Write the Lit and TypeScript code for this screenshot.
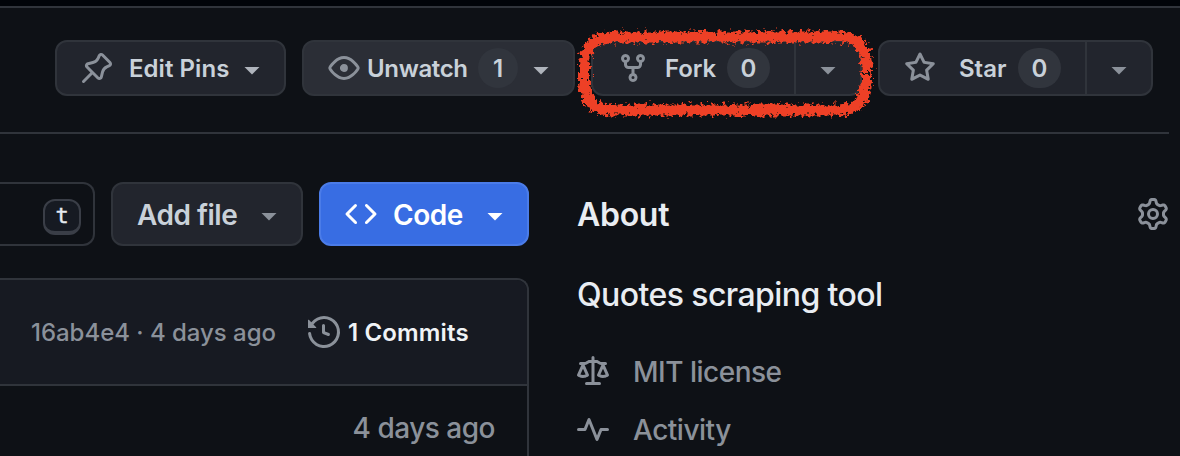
import { LitElement, html, css, svg } from "lit";
import { customElement, property } from "lit/decorators.js";

const ICONS: Record<string, string> = {
  pin: "m11.294.984 3.722 3.722a1.75 1.75 0 0 1-.504 2.826l-1.327.613a3.089 3.089 0 0 0-1.707 2.084l-.584 2.454c-.317 1.332-1.972 1.8-2.94.832L5.75 11.311 1.78 15.28a.749.749 0 1 1-1.06-1.06l3.969-3.97-2.204-2.204c-.968-.968-.5-2.623.832-2.94l2.454-.584a3.08 3.08 0 0 0 2.084-1.707l.613-1.327a1.75 1.75 0 0 1 2.826-.504ZM6.283 9.723l2.732 2.731a.25.25 0 0 0 .42-.119l.584-2.454a4.586 4.586 0 0 1 2.537-3.098l1.328-.613a.25.25 0 0 0 .072-.404l-3.722-3.722a.25.25 0 0 0-.404.072l-.613 1.328a4.584 4.584 0 0 1-3.098 2.537l-2.454.584a.25.25 0 0 0-.119.42l2.731 2.732Z",
  eye: "M8 2c1.981 0 3.671.992 4.933 2.078 1.27 1.091 2.187 2.345 2.637 3.023a1.62 1.62 0 0 1 0 1.798c-.45.678-1.367 1.932-2.637 3.023C11.67 13.008 9.981 14 8 14c-1.981 0-3.671-.992-4.933-2.078C1.797 10.83.88 9.576.43 8.898a1.62 1.62 0 0 1 0-1.798c.45-.677 1.367-1.931 2.637-3.022C4.33 2.992 6.019 2 8 2ZM1.679 7.932a.12.12 0 0 0 0 .136c.411.622 1.241 1.75 2.366 2.717C5.176 11.758 6.527 12.5 8 12.5c1.473 0 2.825-.742 3.955-1.715 1.124-.967 1.954-2.096 2.366-2.717a.12.12 0 0 0 0-.136c-.412-.621-1.242-1.75-2.366-2.717C10.824 4.242 9.473 3.5 8 3.5c-1.473 0-2.825.742-3.955 1.715-1.124.967-1.954 2.096-2.366 2.717ZM8 10a2 2 0 1 1-.001-3.999A2 2 0 0 1 8 10Z",
  fork: "M5 5.372v.878c0 .414.336.75.75.75h4.5a.75.75 0 0 0 .75-.75v-.878a2.25 2.25 0 1 1 1.5 0v.878a2.25 2.25 0 0 1-2.25 2.25h-1.5v2.128a2.251 2.251 0 1 1-1.5 0V8.5h-1.5A2.25 2.25 0 0 1 3.5 6.25v-.878a2.25 2.25 0 1 1 1.5 0ZM5 3.25a.75.75 0 1 0-1.5 0 .75.75 0 0 0 1.5 0Zm6.75.75a.75.75 0 1 0 0-1.5.75.75 0 0 0 0 1.5Zm-3 8.75a.75.75 0 1 0-1.5 0 .75.75 0 0 0 1.5 0Z",
  star: "M8 .25a.75.75 0 0 1 .673.418l1.882 3.815 4.21.612a.75.75 0 0 1 .416 1.279l-3.046 2.97.719 4.192a.751.751 0 0 1-1.088.791L8 12.347l-3.766 1.98a.75.75 0 0 1-1.088-.79l.72-4.194L.818 6.374a.75.75 0 0 1 .416-1.28l4.21-.611L7.327.668A.75.75 0 0 1 8 .25Zm0 2.445L6.615 5.5a.75.75 0 0 1-.564.41l-3.097.45 2.24 2.184a.75.75 0 0 1 .216.664l-.528 3.084 2.769-1.456a.75.75 0 0 1 .698 0l2.77 1.456-.53-3.084a.75.75 0 0 1 .216-.664l2.24-2.183-3.096-.45a.75.75 0 0 1-.564-.41L8 2.694Z",
  code: "m11.28 3.22 4.25 4.25a.75.75 0 0 1 0 1.06l-4.25 4.25a.749.749 0 0 1-1.275-.326.749.749 0 0 1 .215-.734L13.94 8l-3.72-3.72a.749.749 0 0 1 .326-1.275.749.749 0 0 1 .734.215Zm-6.56 0a.751.751 0 0 1 1.042.018.751.751 0 0 1 .018 1.042L2.06 8l3.72 3.72a.749.749 0 0 1-.326 1.275.749.749 0 0 1-.734-.215L.47 8.53a.75.75 0 0 1 0-1.06Z",
  history: "m.427 1.927 1.215 1.215a8.002 8.002 0 1 1-1.6 5.685.75.75 0 1 1 1.493-.154 6.5 6.5 0 1 0 1.18-4.458l1.358 1.358A.25.25 0 0 1 3.896 6H.25A.25.25 0 0 1 0 5.75V2.104a.25.25 0 0 1 .427-.177ZM7.75 4a.75.75 0 0 1 .75.75v2.992l2.028.812a.75.75 0 0 1-.557 1.392l-2.5-1A.751.751 0 0 1 7 8.25v-3.5A.75.75 0 0 1 7.75 4Z",
  law: "M8.75.75V2h.985c.304 0 .603.08.867.231l1.29.736c.038.022.08.033.124.033h2.234a.75.75 0 0 1 0 1.5h-.427l2.111 4.692a.75.75 0 0 1-.154.838l-.53-.53.529.531-.001.002-.002.002-.006.006-.006.005-.01.01-.045.04c-.21.176-.441.327-.686.45C14.556 10.78 13.88 11 13 11a4.498 4.498 0 0 1-2.023-.454 3.544 3.544 0 0 1-.686-.45l-.045-.04-.016-.015-.006-.006-.004-.004v-.001a.75.75 0 0 1-.154-.838L12.178 4.5h-.162c-.305 0-.604-.079-.868-.231l-1.29-.736a.245.245 0 0 0-.124-.033H8.75V13h2.5a.75.75 0 0 1 0 1.5h-6.5a.75.75 0 0 1 0-1.5h2.5V3.5h-.984a.245.245 0 0 0-.124.033l-1.289.737c-.265.15-.564.23-.869.23h-.162l2.112 4.692a.75.75 0 0 1-.154.838l-.53-.53.529.531-.001.002-.002.002-.006.006-.016.015-.045.04c-.21.176-.441.327-.686.45C4.556 10.78 3.88 11 3 11a4.498 4.498 0 0 1-2.023-.454 3.544 3.544 0 0 1-.686-.45l-.045-.04-.016-.015-.006-.006-.004-.004v-.001a.75.75 0 0 1-.154-.838L2.178 4.5H1.75a.75.75 0 0 1 0-1.5h2.234a.249.249 0 0 0 .125-.033l1.288-.737c.265-.15.564-.23.869-.23h.984V.75a.75.75 0 0 1 1.5 0Zm2.945 8.477c.285.135.718.273 1.305.273s1.02-.138 1.305-.273L13 6.327Zm-10 0c.285.135.718.273 1.305.273s1.02-.138 1.305-.273L3 6.327Z",
  pulse: "M6 2c.306 0 .582.187.696.471L10 10.731l1.304-3.26A.751.751 0 0 1 12 7h3.25a.75.75 0 0 1 0 1.5h-2.742l-1.812 4.528a.751.751 0 0 1-1.392 0L6 4.77 4.696 8.03A.75.75 0 0 1 4 8.5H.75a.75.75 0 0 1 0-1.5h2.742l1.812-4.529A.751.751 0 0 1 6 2Z",
  gear: "M8 0a8.2 8.2 0 0 1 .701.031C9.444.095 9.99.645 10.16 1.29l.288 1.107c.018.066.079.158.212.224.231.114.454.243.668.386.123.082.233.09.299.071l1.103-.303c.644-.176 1.392.021 1.82.63.27.385.506.792.704 1.218.315.675.111 1.422-.364 1.891l-.814.806c-.049.048-.098.147-.088.294.016.257.016.515 0 .772-.01.147.038.246.088.294l.814.806c.475.469.679 1.216.364 1.891a7.977 7.977 0 0 1-.704 1.217c-.428.61-1.176.807-1.82.63l-1.102-.302c-.067-.019-.177-.011-.3.071a5.909 5.909 0 0 1-.668.386c-.133.066-.194.158-.211.224l-.29 1.106c-.168.646-.715 1.196-1.458 1.26a8.006 8.006 0 0 1-1.402 0c-.743-.064-1.289-.614-1.458-1.26l-.289-1.106c-.018-.066-.079-.158-.212-.224a5.738 5.738 0 0 1-.668-.386c-.123-.082-.233-.09-.299-.071l-1.103.303c-.644.176-1.392-.021-1.82-.63a8.12 8.12 0 0 1-.704-1.218c-.315-.675-.111-1.422.363-1.891l.815-.806c.05-.048.098-.147.088-.294a6.214 6.214 0 0 1 0-.772c.01-.147-.038-.246-.088-.294l-.815-.806C.635 6.045.431 5.298.746 4.623a7.92 7.92 0 0 1 .704-1.217c.428-.61 1.176-.807 1.82-.63l1.102.302c.067.019.177.011.3-.071.214-.143.437-.272.668-.386.133-.066.194-.158.211-.224l.29-1.106C6.009.645 6.556.095 7.299.03 7.53.01 7.764 0 8 0Zm-.571 1.525c-.036.003-.108.036-.137.146l-.289 1.105c-.147.561-.549.967-.998 1.189-.173.086-.34.183-.5.29-.417.278-.97.423-1.529.27l-1.103-.303c-.109-.03-.175.016-.195.045-.22.312-.412.644-.573.99-.014.031-.021.11.059.19l.815.806c.411.406.562.957.53 1.456a4.709 4.709 0 0 0 0 .582c.032.499-.119 1.05-.53 1.456l-.815.806c-.081.08-.073.159-.059.19.162.346.353.677.573.989.02.03.085.076.195.046l1.102-.303c.56-.153 1.113-.008 1.53.27.161.107.328.204.501.29.447.222.85.629.997 1.189l.289 1.105c.029.109.101.143.137.146a6.6 6.6 0 0 0 1.142 0c.036-.003.108-.036.137-.146l.289-1.105c.147-.561.549-.967.998-1.189.173-.086.34-.183.5-.29.417-.278.97-.423 1.529-.27l1.103.303c.109.029.175-.016.195-.045.22-.313.411-.644.573-.99.014-.031.021-.11-.059-.19l-.815-.806c-.411-.406-.562-.957-.53-1.456a4.709 4.709 0 0 0 0-.582c-.032-.499.119-1.05.53-1.456l.815-.806c.081-.08.073-.159.059-.19a6.464 6.464 0 0 0-.573-.989c-.02-.03-.085-.076-.195-.046l-1.102.303c-.56.153-1.113.008-1.53-.27a4.44 4.44 0 0 0-.501-.29c-.447-.222-.85-.629-.997-1.189l-.289-1.105c-.029-.11-.101-.143-.137-.146a6.6 6.6 0 0 0-1.142 0ZM11 8a3 3 0 1 1-6 0 3 3 0 0 1 6 0ZM9.5 8a1.5 1.5 0 1 0-3.001.001A1.5 1.5 0 0 0 9.5 8Z",
};

@customElement("oct-icon")
export class OctIcon extends LitElement {
  @property() name = "";
  static styles = css`
    :host { display: block; flex: none; width: 32px; height: 32px; }
    .glyph { display: block; width: 100%; height: 100%; fill: currentColor; overflow: visible; }
  `;
  render() {
    return html`<svg class="glyph" viewBox="0 0 16 16">${svg`<path d=${ICONS[this.name]}></path>`}</svg>`;
  }
}

@customElement("app-root")
export class AppRoot extends LitElement {
  static styles = css`
    :host {
      display: block;
      height: 456px;
      overflow: hidden;
      position: relative;
      background: #0e1116;
      color: #c9d1d9;
      font-family: Inter, "Liberation Sans", sans-serif;
      font-size: 24px;
      font-weight: 450;
      line-height: 32px;
    }
    * { box-sizing: border-box; }
    .topbar { height: 8px; background: #010409; border-bottom: 2px solid #30343b; }
    .actions { display: flex; height: 126px; padding: 32px 0 0 55px; margin-right: 11px; border-bottom: 2px solid #30343b; }
    .btn {
      display: flex; align-items: center; flex: none;
      height: 56px; border: 2px solid #30343b; border-radius: 12px;
      background: #22252d; font-weight: 570; white-space: nowrap;
    }
    .label { flex: none; padding-top: 2px; }
    .muted { color: #8b919a; }
    .pins { width: 231px; padding-left: 24px; }
    .pins .label { width: 100px; margin-left: 16px; letter-spacing: 0.05px; }
    .watch { width: 273px; margin-left: 16px; padding-left: 24px; background: #2b2e36; }
    .watch .label { width: 101px; margin-left: 7px; letter-spacing: -0.35px; }
    .forkbtn { width: 271px; margin-left: 16px; padding-left: 24px; }
    .forkbtn .label { width: 51px; margin-left: 16px; letter-spacing: -0.1px; }
    .starbtn { width: 275px; margin-left: 16px; padding-left: 24px; }
    .starbtn .label { width: 48px; margin-left: 23px; letter-spacing: 0; }
    .count {
      display: flex; align-items: center; justify-content: center; flex: none; padding-top: 2px;
      width: 43px; height: 40px; border-radius: 20px; background: #31353d;
    }
    .tally-watch { width: 40px; margin-left: 10px; }
    .tally { margin: 0 24px 0 11px; }
    .caret { flex: none; width: 16px; height: 8px; background: currentColor; clip-path: polygon(0 0, 100% 0, 50% 100%); margin-top: 5px; }
    .pins .caret, .watch .caret { color: #afb4bc; margin-left: 15px; }
    .split { display: flex; align-items: center; justify-content: center; align-self: stretch; flex: 1; border-left: 2px solid #30343b; color: #8b919a; }
    .annotation { position: absolute; left: 566px; top: 18px; width: 320px; height: 110px; }
    .main { display: flex; }
    .files { width: 529px; flex: none; padding-top: 48px; }
    .tools { display: flex; height: 64px; font-size: 28px; }
    .search {
      width: 95px; border: 2px solid #30343b; border-left: 0; border-radius: 0 12px 12px 0;
      display: flex; justify-content: flex-end; padding: 15px 12px 0 0;
    }
    .key {
      width: 38px; height: 36px; border: 2px solid #3a3e47; border-bottom-width: 4px; border-radius: 12px;
      background: #161a22; color: #e6eaf0; font: 22px/29px "DejaVu Sans Mono", monospace; text-align: center;
      -webkit-text-stroke: 0.4px #e6eaf0;
    }
    .tools .btn { height: 64px; }
    .add { width: 192px; margin-left: 16px; padding-left: 24px; }
    .add .label { width: 101px; margin-right: 23px; letter-spacing: -0.5px; }
    .code { width: 210px; margin-left: 16px; padding-left: 24px; background: #386de3; border-color: #4b7ce8; color: #fff; font-weight: 640; }
    .code .label { width: 70px; margin: 0 24px 0 16px; letter-spacing: -0.5px; }
    .table { margin-top: 32px; height: 200px; border: 2px solid #30343b; border-left: 0; border-bottom: 0; border-radius: 0 12px 0 0; overflow: hidden; }
    .latest { height: 106px; display: flex; align-items: center; background: #171a22; border-bottom: 2px solid #30343b; padding: 0 0 0 31px; white-space: nowrap; }
    .latest .sha { width: 243px; margin-right: 34px; padding-top: 2px; letter-spacing: -0.03px; }
    .commits { margin-left: 8px; padding-top: 2px; color: #f0f3f6; font-weight: 620; letter-spacing: 0.15px; }
    .filerow { display: flex; justify-content: flex-end; padding: 24px 32px 0 0; font-size: 28px; line-height: 36px; }
    .when { letter-spacing: -0.5px; }
    .about { flex: 1; padding: 60px 11px 0 48px; white-space: nowrap; }
    .head { display: flex; align-items: center; justify-content: space-between; height: 40px; }
    .title { padding-top: 2px; font-size: 32px; font-weight: 640; color: #e9edf2; letter-spacing: -0.3px; }
    .head oct-icon { margin-bottom: 1px; }
    .desc { margin-top: 41px; font-size: 32px; line-height: 40px; color: #e9edf2; letter-spacing: -0.58px; }
    .meta { display: flex; align-items: center; height: 36px; margin-top: 39px; gap: 24px; font-size: 28px; line-height: 36px; }
    .meta + .meta { margin-top: 22px; }
    .mit, .act { letter-spacing: -0.5px; }
  `;

  render() {
    return html`
      <div class="topbar"></div>
      <div class="actions">
        <div class="btn pins">
          <oct-icon class="muted" name="pin"></oct-icon><span class="label">Edit Pins</span>
          <span class="caret"></span>
        </div>
        <div class="btn watch">
          <oct-icon class="muted" name="eye"></oct-icon><span class="label">Unwatch</span>
          <span class="count tally-watch">1</span>
          <span class="caret"></span>
        </div>
        <div class="btn forkbtn">
          <oct-icon class="muted" name="fork"></oct-icon><span class="label">Fork</span>
          <span class="count tally">0</span>
          <span class="split"><span class="caret"></span></span>
        </div>
        <div class="btn starbtn">
          <oct-icon class="muted" name="star"></oct-icon><span class="label">Star</span>
          <span class="count tally">0</span>
          <span class="split"><span class="caret"></span></span>
        </div>
      </div>
      <div class="main">
        <div class="files">
          <div class="tools">
            <div class="search"><span class="key">t</span></div>
            <div class="btn add"><span class="label">Add file</span><span class="caret muted"></span></div>
            <div class="btn code"><oct-icon name="code"></oct-icon><span class="label">Code</span><span class="caret"></span></div>
          </div>
          <div class="table">
            <div class="latest">
              <span class="sha muted">16ab4e4 · 4 days ago</span>
              <oct-icon class="muted" name="history"></oct-icon><span class="commits">1 Commits</span>
            </div>
            <div class="filerow muted"><span class="when">4 days ago</span></div>
          </div>
        </div>
        <div class="about">
          <div class="head"><span class="title">About</span><oct-icon class="muted" name="gear"></oct-icon></div>
          <div class="desc">Quotes scraping tool</div>
          <div class="meta muted"><oct-icon name="law"></oct-icon><span class="mit">MIT license</span></div>
          <div class="meta muted"><oct-icon name="pulse"></oct-icon><span class="act">Activity</span></div>
        </div>
      </div>
      <svg class="annotation" viewBox="566 18 320 110">
        <defs>
          <filter id="rough" filterUnits="userSpaceOnUse" x="566" y="18" width="320" height="110">
            <feTurbulence type="fractalNoise" baseFrequency="0.27" numOctaves="3" seed="4" result="n"></feTurbulence>
            <feDisplacementMap in="SourceGraphic" in2="n" scale="12" xChannelSelector="R" yChannelSelector="G"></feDisplacementMap>
          </filter>
        </defs>
        <path d="M867 71 V66 C866 45 858 37 838 37 H612 C593 37 585 46 584.500 66 V82 C585 101 593 110 612 110 H838 C859 110 866 101 867 74" fill="none" stroke="#ee4025" stroke-width="11" filter="url(#rough)"></path>
      </svg>
    `;
  }
}
